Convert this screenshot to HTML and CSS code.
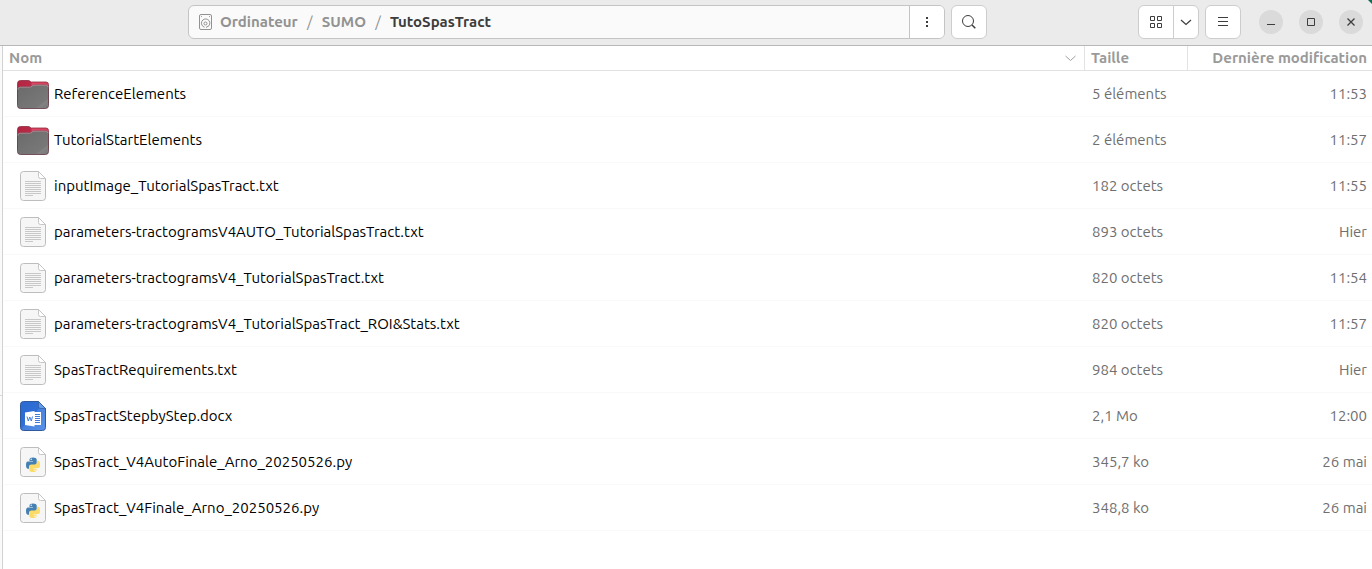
FILE: index.html
```
<!DOCTYPE html>
<html lang="fr">
<head>
<meta charset="utf-8">
<title>TutoSpasTract</title>
<link rel="stylesheet" href="styles.css">
</head>
<body>
<svg class="defs" aria-hidden="true">
  <defs>
    <linearGradient id="red" x1="0" y1="0" x2="1" y2="0"><stop offset="0" stop-color="#b32440"/><stop offset=".42" stop-color="#b82b48"/><stop offset=".48" stop-color="#dd4562"/><stop offset="1" stop-color="#d8405c"/></linearGradient>
    <linearGradient id="grey" x1="0" y1="0" x2="1" y2="1"><stop offset="0" stop-color="#6a6a6a"/><stop offset=".78" stop-color="#787878"/><stop offset=".8" stop-color="#828282"/><stop offset="1" stop-color="#787878"/></linearGradient>
    <linearGradient id="blue" x1="0" y1="0" x2="1" y2="1"><stop offset="0" stop-color="#2b6ad0"/><stop offset=".48" stop-color="#2f70d6"/><stop offset=".5" stop-color="#4580dc"/><stop offset="1" stop-color="#5a93e8"/></linearGradient>
    <symbol id="folder" viewBox="0 0 32 32">
      <path d="M.5 5.500q0-3 3-3h7.500q1.500 0 2.500 1l.6.500h14.900q2.500 0 2.500 2.500v18h-31z" fill="url(#red)" stroke="#8a2c42" stroke-width=".8"/>
      <path d="M.5 11.500q0-2.500 2.500-2.500h9.500q1.500 0 2.500-1t2-1h12q2.500 0 2.500 2.500v18q0 3-3 3h-25q-3 0-3-3z" fill="url(#grey)" stroke="#6b434e" stroke-width=".9"/>
      <path d="M1 11.500q0-2.300 2-2.300h9.500q1.500 0 2.500-1t2-1h12q2 0 2 2" fill="none" stroke="#b99aa1" stroke-width=".8"/>
    </symbol>
    <symbol id="text" viewBox="0 0 32 32">
      <path d="M6.500 1.500h15l7 7v19q0 3-3 3h-19q-3 0-3-3v-23q0-3 3-3z" fill="#f6f6f6" stroke="#bdbdbd"/>
      <path d="M21.500 1.500v5q0 2 2 2h5z" fill="#fff" stroke="#c6c6c6"/>
      <path d="M8 11.500h16M8 13.500h16M8 15.500h16M8 17.500h16M8 19.500h16M8 21.500h16M8 23.500h16M8 25.500h8" stroke="#c8c8c8"/>
    </symbol>
    <symbol id="word" viewBox="0 0 32 32">
      <path d="M6.500 1.500h15l7 7v19q0 3-3 3h-19q-3 0-3-3v-23q0-3 3-3z" fill="url(#blue)" stroke="#30599c"/>
      <path d="M21.500 1.500v5q0 2 2 2h5z" fill="#639be9" stroke="#30599c" stroke-width=".7"/>
      <path d="M17 12h7v13h-7z" fill="#fff"/>
      <path d="M18 14.500h5M18 16.500h5M18 18.500h5M18 20.500h5M18 22.500h5" stroke="#3f7cdc"/>
      <path d="M8 12.500l9.500-1.500v15.500l-9.500-1.500z" fill="#fff"/>
      <path d="M10 16.500l1.300 4.500 1.500-4 1.500 4 1.200-4.500" fill="none" stroke="#3f7cdc" stroke-width="1"/>
    </symbol>
    <symbol id="python" viewBox="0 0 32 32">
      <path d="M6.500 1.500h15l7 7v19q0 3-3 3h-19q-3 0-3-3v-23q0-3 3-3z" fill="#f6f6f6" stroke="#bdbdbd"/>
      <path d="M21.500 1.500v5q0 2 2 2h5z" fill="#fff" stroke="#c6c6c6"/>
      <path d="M12.500 15v-1.500q0-2 3.500-2t3.700 2v3.500q0 2-2 2h-3.700q-2 0-2 2v1.800h-1q-2 0-2-3.800t2-3.500h5v-.5z" fill="#4480b4"/>
      <path d="M19.500 22.500v1.500q0 2-3.500 2t-3.700-2v-3.500q0-2 2-2h3.700q2 0 2-2v-1.800h1q2 0 2 3.800t-2 3.500h-5v.5z" fill="#fddb68"/>
      <circle cx="14.200" cy="13.300" r=".7" fill="#fff"/><circle cx="18" cy="24.300" r=".7" fill="#fff"/>
    </symbol>
  </defs>
</svg>
<header class="headerbar">
  <nav class="pathbar" aria-label="Emplacement">
    <div class="crumbs">
      <svg class="disk" width="14" height="16" viewBox="0 0 14 16" fill="none" stroke="#929292"><rect x=".5" y=".5" width="12" height="15" rx="1.500"/><path d="M5.500 13.200a4.200 4.200 0 1 1 4.500-1.500L7 13.500"/><circle cx="6.500" cy="9.500" r="1.500"/><path d="M2 2.500h1M10 2.500h1" stroke-width=".8"/></svg>
      <a class="crumb" href="#">Ordinateur</a><span class="sep">/</span><a class="crumb" href="#">SUMO</a><span class="sep">/</span><a class="crumb current" href="#" aria-current="page">TutoSpasTract</a>
    </div>
    <button class="more" aria-label="Menu du dossier"><svg width="16" height="16" fill="#3d3d3d"><path d="M7 3h2v2H7zM7 7h2v2H7zM7 11h2v2H7z"/></svg></button>
  </nav>
  <button class="tool" aria-label="Rechercher"><svg width="16" height="16" fill="none" stroke="#3d3d3d"><circle cx="7" cy="7" r="5.500"/><path d="M11 11l3.300 3.300" stroke-width="1.500"/></svg></button>
  <div class="views">
    <button aria-label="Vue en grille"><svg width="16" height="16" fill="none" stroke="#3d3d3d"><path d="M2.500 2.500h4v4h-4zM9.500 2.500h4v4h-4zM2.500 9.500h4v4h-4zM9.500 9.500h4v4h-4z"/></svg></button>
    <button class="drop" aria-label="Options d’affichage"><svg width="16" height="16" fill="none" stroke="#3d3d3d" stroke-width="1.200"><path d="M3 6l5 4.500 5-4.500"/></svg></button>
  </div>
  <button class="tool" aria-label="Menu"><svg width="16" height="16" stroke="#3d3d3d"><path d="M3 3.500h10M3 7.500h10M3 11.500h10"/></svg></button>
  <div class="window">
    <button aria-label="Réduire"><svg width="16" height="16" stroke="#3d3d3d"><path d="M4 10.500h8"/></svg></button>
    <button aria-label="Agrandir"><svg width="16" height="16" fill="none" stroke="#3d3d3d"><path d="M4.500 4.500h7v7h-7z"/></svg></button>
    <button aria-label="Fermer"><svg width="16" height="16" stroke="#3d3d3d" stroke-width="1.300"><path d="M4.500 4.500l7 7M11.500 4.500l-7 7"/></svg></button>
  </div>
  <span class="corner"></span>
</header>
<div class="body">
  <aside class="sidebar"><hr></aside>
  <main class="listing">
    <table>
      <colgroup><col><col class="size"><col class="date"></colgroup>
      <thead><tr>
        <th aria-sort="ascending"><button class="sort">Nom<svg width="16" height="16" fill="none" stroke="#a0a0a0"><path d="M2.500 6l5 4.500 5-4.500"/></svg></button></th>
        <th><button class="sort">Taille</button></th>
        <th><button class="sort end">Dernière modification</button></th>
      </tr></thead>
      <tbody>
        <tr><td><div class="file"><svg><use href="#folder"/></svg>ReferenceElements</div></td><td>5 éléments</td><td>11:53</td></tr>
        <tr><td><div class="file"><svg><use href="#folder"/></svg>TutorialStartElements</div></td><td>2 éléments</td><td>11:57</td></tr>
        <tr><td><div class="file"><svg><use href="#text"/></svg>inputImage_TutorialSpasTract.txt</div></td><td>182 octets</td><td>11:55</td></tr>
        <tr><td><div class="file"><svg><use href="#text"/></svg>parameters-tractogramsV4AUTO_TutorialSpasTract.txt</div></td><td>893 octets</td><td>Hier</td></tr>
        <tr><td><div class="file"><svg><use href="#text"/></svg>parameters-tractogramsV4_TutorialSpasTract.txt</div></td><td>820 octets</td><td>11:54</td></tr>
        <tr><td><div class="file"><svg><use href="#text"/></svg>parameters-tractogramsV4_TutorialSpasTract_ROI&amp;Stats.txt</div></td><td>820 octets</td><td>11:57</td></tr>
        <tr><td><div class="file"><svg><use href="#text"/></svg>SpasTractRequirements.txt</div></td><td>984 octets</td><td>Hier</td></tr>
        <tr><td><div class="file"><svg><use href="#word"/></svg>SpasTractStepbyStep.docx</div></td><td>2,1 Mo</td><td>12:00</td></tr>
        <tr><td><div class="file"><svg><use href="#python"/></svg>SpasTract_V4AutoFinale_Arno_20250526.py</div></td><td>345,7 ko</td><td>26 mai</td></tr>
        <tr><td><div class="file"><svg><use href="#python"/></svg>SpasTract_V4Finale_Arno_20250526.py</div></td><td>348,8 ko</td><td>26 mai</td></tr>
      </tbody>
    </table>
  </main>
</div>
</body>
</html>
```
FILE: styles.css
```
* { box-sizing: border-box; }
body {
  margin: 0;
  min-height: 100vh;
  display: flex;
  flex-direction: column;
  background: #fff;
  color: #000;
  font-family: Ubuntu, "Noto Sans", sans-serif;
  font-size: 15px;
  line-height: 20px;
}
button {
  display: flex;
  align-items: center;
  justify-content: center;
  margin: 0;
  padding: 0;
  border: 0;
  background: none;
  color: inherit;
  font: inherit;
}
svg { display: block; flex: none; }
.defs { position: absolute; width: 0; height: 0; }

.headerbar {
  position: relative;
  display: flex;
  align-items: center;
  padding: 5px 9px 6px 188px;
  background: #ebebeb;
  border-bottom: 1px solid #b8b8b8;
}
.pathbar {
  flex: 1;
  display: flex;
  height: 34px;
  margin-right: 6px;
  background: #fafafa;
  border: 1px solid #c4c4c4;
  border-radius: 6px;
  overflow: hidden;
}
.crumbs { flex: 1; display: flex; align-items: center; padding-left: 10px; }
.disk { margin-right: 7px; }
.crumb { color: #929292; font-weight: bold; text-decoration: none; }
.crumb.current { color: #3d3d3d; }
.sep { width: 24px; text-align: center; color: #929292; }
.more { width: 35px; background: #fff; border-left: 1px solid #c4c4c4; }
.tool {
  width: 36px;
  height: 34px;
  background: #fff;
  border: 1px solid #cdcdcd;
  border-radius: 6px;
}
.views {
  display: flex;
  height: 34px;
  margin: 0 6px 0 151px;
  background: #fff;
  border: 1px solid #cdcdcd;
  border-radius: 6px;
}
.views button { width: 34px; }
.views .drop { width: 25px; border-left: 1px solid #cdcdcd; }
.window { display: flex; gap: 16px; margin-left: 18px; }
.window button { width: 24px; height: 24px; border-radius: 50%; background: #dadada; }
.corner {
  position: absolute;
  top: 0;
  right: 0;
  width: 4px;
  height: 4px;
  background: #126b50;
  clip-path: polygon(0 0, 100% 0, 100% 100%);
}

.body { flex: 1; display: flex; }
.sidebar { width: 3px; padding-top: 349px; background: #fafafa; border-right: 1px solid #d2d2d2; }
.sidebar hr { margin: 0; border: 0; border-top: 1px solid #d8d8d8; }
.listing { flex: 1; min-width: 0; }
table { width: 100%; table-layout: fixed; border-collapse: separate; border-spacing: 0; }
.size { width: 103px; }
.date { width: 184px; }
th {
  height: 25px;
  padding: 0 5px 0 6px;
  border-bottom: 1px solid #e2e2e2;
  border-right: 1px solid #e2e2e2;
  color: #9a9a9a;
}
th:last-child { border-right: 0; }
.sort { width: 100%; justify-content: space-between; font-weight: bold; white-space: nowrap; }
.sort.end { justify-content: flex-end; }
td { height: 46px; padding: 0 5px 0 7px; border-bottom: 1px solid #f9f9f9; color: #6f6f6f; }
td:first-child { padding-left: 14px; color: #000; }
td:last-child { text-align: right; }
.file { display: flex; align-items: center; gap: 5px; white-space: nowrap; }
.file svg { width: 32px; height: 32px; }
```
